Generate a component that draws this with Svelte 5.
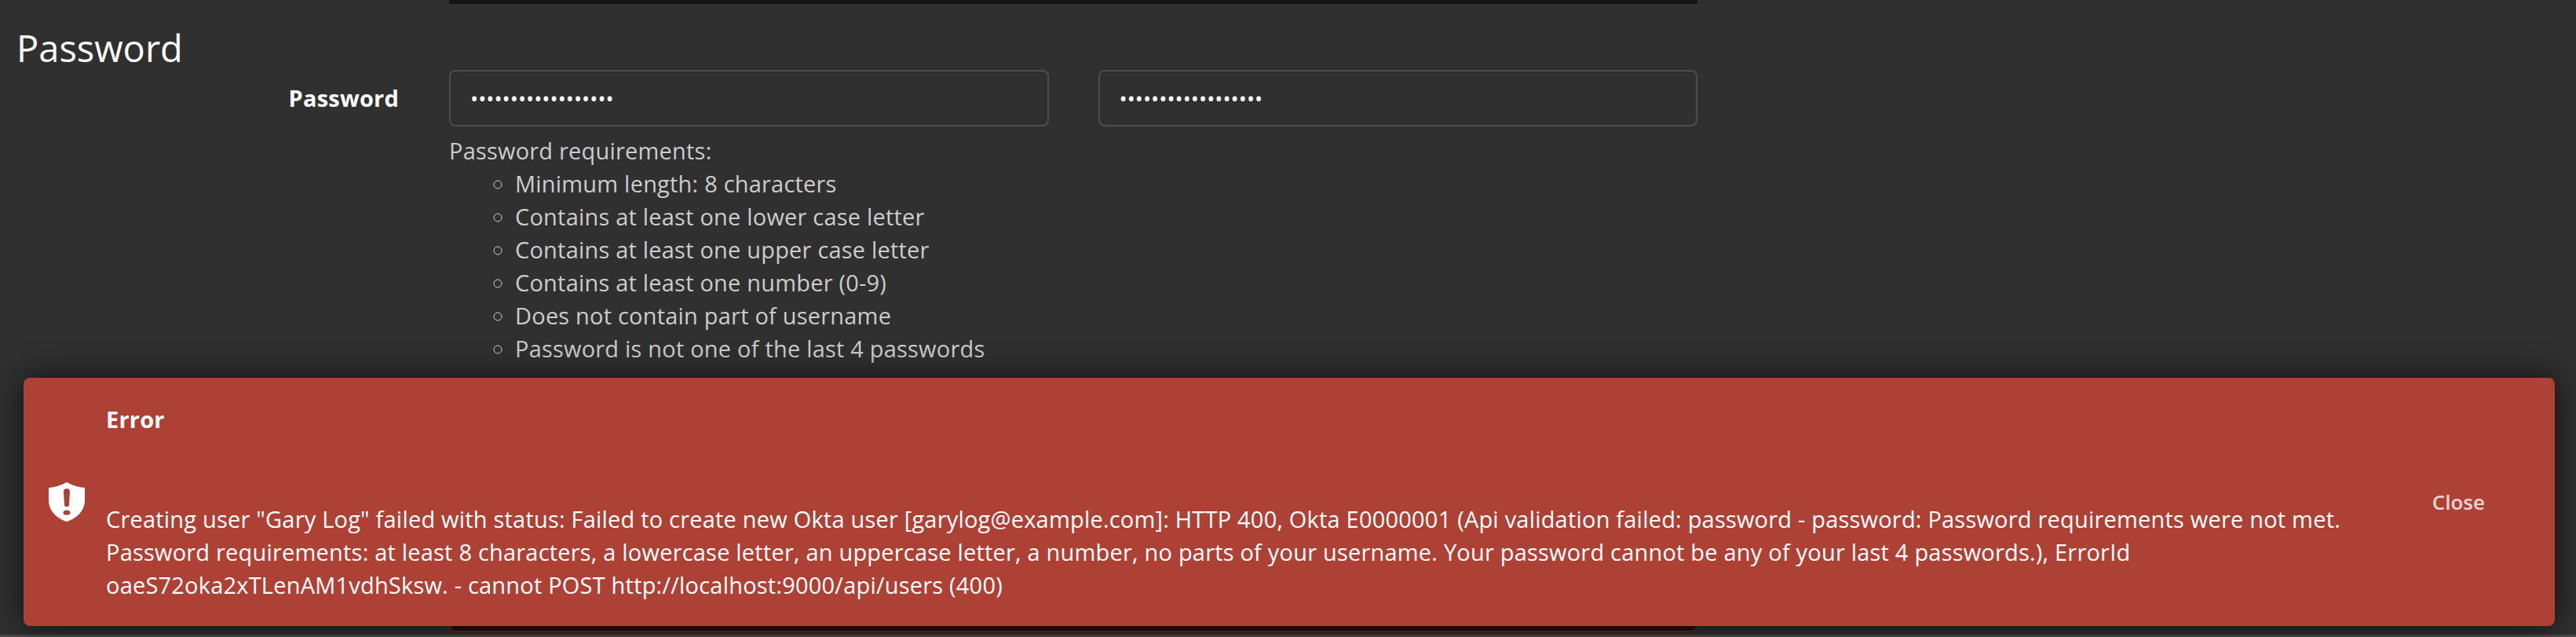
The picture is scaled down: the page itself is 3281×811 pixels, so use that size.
<script lang="ts">
  const requirements = [
    "Minimum length: 8 characters",
    "Contains at least one lower case letter",
    "Contains at least one upper case letter",
    "Contains at least one number (0-9)",
    "Does not contain part of username",
    "Password is not one of the last 4 passwords",
  ];

  const secret = "abcdefghijklmnopqr";
  let showError = $state(true);
</script>

<div class="page">
  <div class="top-rule"></div>
  <h2>Password</h2>

  <div class="form-row">
    <label for="password">Password</label>
    <div class="fields">
      <div class="inputs">
        <input id="password" type="password" value={secret} />
        <input type="password" aria-label="Repeat password" value={secret} />
      </div>
      <div class="help">
        Password requirements:
        <ul>
          {#each requirements as item}
            <li>{item}</li>
          {/each}
        </ul>
      </div>
      <div class="inline-alert"></div>
    </div>
  </div>

  <div class="bottom-strip"></div>

  {#if showError}
    <div class="toast" role="alert">
      <svg class="icon" viewBox="0 0 46 50" aria-hidden="true">
        <path
          fill-rule="evenodd"
          d="M23 0 Q34 6 46 7 V23 C46 36 36 46 23 50 C10 46 0 36 0 23 V7 Q12 6 23 0 Z
             M23 8 C20.5 8 19 9.5 19 12 L20 29 C20.2 32 25.8 32 26 29 L27 12 C27 9.5 25.5 8 23 8 Z
             M23 35.5 C20 35.5 18.5 37 18.5 38.7 C18.5 40.4 20 41.8 23 41.8 C26 41.8 27.5 40.4 27.5 38.7 C27.5 37 26 35.5 23 35.5 Z"
        />
      </svg>
      <div class="toast-body">
        <div class="toast-title">Error</div>
        <p>Creating user "Gary Log" failed with status: Failed to create new Okta user [garylog@example.com]: HTTP 400, Okta E0000001 (Api validation failed: password - password: Password requirements were not met. Password requirements: at least 8 characters, a lowercase letter, an uppercase letter, a number, no parts of your username. Your password cannot be any of your last 4 passwords.), ErrorId oaeS72oka2xTLenAM1vdhSksw. - cannot POST http://localhost:9000/api/users (400)</p>
      </div>
      <button type="button" class="close" onclick={() => (showError = false)}>Close</button>
    </div>
  {/if}
</div>

<style>
  :global(body) {
    margin: 0;
    background: #303030;
  }

  .page {
    position: relative;
    display: flex;
    flex-direction: column;
    height: 811px;
    overflow: hidden;
    background: #303030;
    color: #cccccc;
    font-family: "Open Sans", "Liberation Sans", sans-serif;
    font-size: 29px;
    letter-spacing: 0.2px;
    line-height: 42px;
  }

  .top-rule {
    flex-shrink: 0;
    width: 1590px;
    height: 5px;
    margin-left: 572px;
    background: #141414;
  }

  h2 {
    margin: 31px 0 2px 21px;
    color: #ffffff;
    font-size: 47px;
    font-weight: 400;
    letter-spacing: 0;
    line-height: 51px;
  }

  .form-row {
    display: grid;
    grid-template-columns: 572px 1590px;
  }

  label {
    padding-right: 64px;
    color: #ffffff;
    font-weight: 700;
    line-height: 72px;
    text-align: right;
  }

  .inputs {
    display: grid;
    grid-template-columns: 1fr 1fr;
    gap: 63px;
  }

  input {
    box-sizing: border-box;
    width: 100%;
    height: 72px;
    padding: 0 25px;
    border: 2px solid #4d4d4d;
    border-radius: 8px;
    outline: none;
    background: transparent;
    color: #ffffff;
    font-family: inherit;
    font-size: 27px;
    letter-spacing: 0;
  }

  .help {
    margin-top: 10px;
  }

  ul {
    margin: 0;
    padding-left: 84px;
    list-style: circle;
  }

  .inline-alert {
    box-sizing: border-box;
    height: 321px;
    margin-top: 19px;
    border: 2px solid #5e2a23;
    border-radius: 8px;
    background: #2a0f0c;
  }

  .bottom-strip {
    flex-shrink: 0;
    height: 3px;
    margin-top: auto;
    background: #4a4a4a;
  }

  .toast {
    position: absolute;
    right: 27px;
    bottom: 14px;
    left: 30px;
    box-sizing: border-box;
    display: flex;
    align-items: center;
    height: 316px;
    padding: 0 49px 0 32px;
    border-radius: 8px;
    background: #ae4136;
    box-shadow: 0 0 40px rgba(0, 0, 0, 0.7);
    color: #ffffff;
  }

  .icon {
    flex-shrink: 0;
    width: 46px;
    height: 50px;
    margin-right: 27px;
    fill: #ffffff;
  }

  .toast-body {
    flex: 1;
    min-width: 0;
  }

  .toast-title {
    margin-bottom: 85px;
    font-weight: 700;
  }

  p {
    margin: 0;
  }

  .close {
    flex-shrink: 0;
    padding: 12px 40px;
    border: 0;
    background: none;
    color: rgba(255, 255, 255, 0.8);
    cursor: pointer;
    font-family: inherit;
    font-size: 26px;
    font-weight: 600;
    line-height: 36px;
  }
</style>
